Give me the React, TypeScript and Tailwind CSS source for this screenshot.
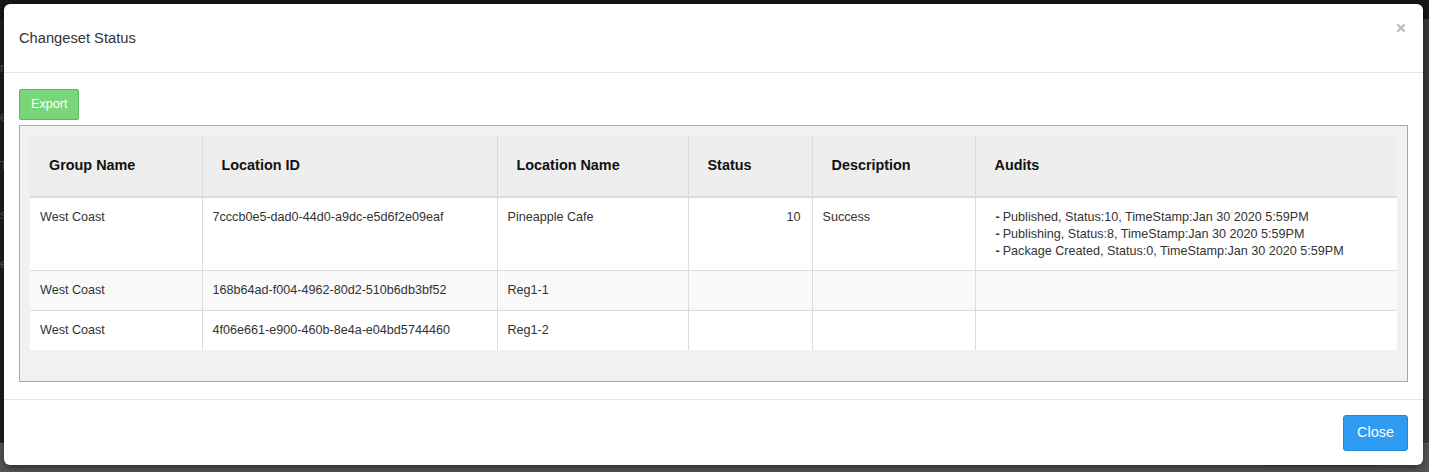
import { X } from "lucide-react";

type Row = {
  group: string;
  locationId: string;
  locationName: string;
  status?: number;
  description?: string;
  audits: string[];
};

const rows: Row[] = [
  {
    group: "West Coast",
    locationId: "7cccb0e5-dad0-44d0-a9dc-e5d6f2e09eaf",
    locationName: "Pineapple Cafe",
    status: 10,
    description: "Success",
    audits: [
      "Published, Status:10, TimeStamp:Jan 30 2020 5:59PM",
      "Publishing, Status:8, TimeStamp:Jan 30 2020 5:59PM",
      "Package Created, Status:0, TimeStamp:Jan 30 2020 5:59PM",
    ],
  },
  {
    group: "West Coast",
    locationId: "168b64ad-f004-4962-80d2-510b6db3bf52",
    locationName: "Reg1-1",
    audits: [],
  },
  {
    group: "West Coast",
    locationId: "4f06e661-e900-460b-8e4a-e04bd5744460",
    locationName: "Reg1-2",
    audits: [],
  },
];

const headers = ["Group Name", "Location ID", "Location Name", "Status", "Description", "Audits"];

// page behind the dialog, dimmed by the backdrop
function BackgroundPage() {
  return (
    <div className="flex h-full flex-col">
      <div className="h-[20px] bg-[#161616]" />
      <div className="flex h-[446px]">
        <div className="flex w-[60px] flex-col gap-[30px] bg-[#1f1f1f] pt-[40px] text-[12.6px] text-[#5a5a5a]">
          <span>r</span>
          <span>e</span>
          <span>T</span>
          <span>s</span>
          <span>e</span>
        </div>
        <div className="flex-1 bg-[#3b3b3b]" />
      </div>
      <div className="flex h-[30px] items-start border-t border-[#6a6a6a] bg-[#575757] pt-[2px] text-[12.6px] text-[#151515]">
        <div className="w-[244px]" />
        <div className="w-[17px] border-l border-[#4a4a4a]" />
        <div className="flex w-[58px] justify-center border-l border-[#4a4a4a]">
          <span className="mt-[1px] h-[14px] w-[14px] border border-[#333] bg-[#606060]" />
        </div>
        <div className="w-[212px] border-l border-[#4a4a4a] pl-[10px]">
          Changeset 20200130-1 <span className="text-[#20446b]">(1)</span>
        </div>
        <div className="w-[186px] border-l border-[#4a4a4a] pl-[10px]">1/30/2020 8:43:24 AM</div>
        <div className="w-[151px] border-l border-[#4a4a4a] pl-[10px]">Melissa Cruz</div>
        <div className="w-[107px] border-l border-[#4a4a4a]" />
        <div className="w-[276px] border-l border-[#4a4a4a] pl-[10px]">Pineapple Cafe</div>
        <div className="border-l border-[#4a4a4a] pl-[12px]">
          <div className="h-[20px] w-[113px] bg-[#2c4a2c]" />
        </div>
      </div>
    </div>
  );
}

export default function App() {
  return (
    <div className="relative h-[472px] w-[1429px] overflow-hidden bg-[#3b3b3b] font-['Liberation_Sans',Arial,sans-serif]">
      <BackgroundPage />

      <div className="absolute left-[4px] top-[4px] flex w-[1419px] flex-col rounded-[6px] bg-white shadow-[0_3px_9px_rgba(0,0,0,0.5)]">
        <div className="flex h-[69px] items-center justify-between border-b border-[#e5e5e5] px-[15px]">
          <h4 className="text-[14.7px] text-[#333]">Changeset Status</h4>
          <button className="mr-[1px] -mt-[21px] text-[#bdbdbd]">
            <X className="h-[12px] w-[12px]" strokeWidth={4.5} />
          </button>
        </div>

        <div className="px-[15px] pb-[17px] pt-[16px]">
          <button className="h-[31px] rounded-[2px] border border-[#5cb85c] bg-[#79d579] px-[11px] text-[12.6px] text-white">
            Export
          </button>

          <div className="mt-[5px] border border-[#a8a8a8] bg-[#f1f1f1] px-[10px] pb-[31px] pt-[10px]">
            <table className="w-full table-fixed border-collapse">
              <colgroup>
                <col className="w-[172px]" />
                <col className="w-[295px]" />
                <col className="w-[191px]" />
                <col className="w-[124px]" />
                <col className="w-[163px]" />
                <col />
              </colgroup>
              <thead>
                <tr className="bg-[#eeeeee]">
                  {headers.map((h) => (
                    <th
                      key={h}
                      className="h-[61px] border-b-2 border-l border-[#dcdcdc] px-[19px] text-left align-middle text-[14.4px] font-bold text-[#111] first:border-l-0"
                    >
                      {h}
                    </th>
                  ))}
                </tr>
              </thead>
              <tbody>
                {rows.map((row, i) => (
                  <tr key={row.locationId} className={i % 2 === 1 ? "bg-[#f9f9f9]" : "bg-white"}>
                    <td className="border-t border-[#dcdcdc] px-[10px] py-[11px] align-top text-[12.6px] leading-[16.8px] text-[#333]">
                      {row.group}
                    </td>
                    <td className="border-l border-t border-[#dcdcdc] px-[10px] py-[11px] align-top text-[12.6px] leading-[16.8px] text-[#333]">
                      {row.locationId}
                    </td>
                    <td className="border-l border-t border-[#dcdcdc] px-[10px] py-[11px] align-top text-[12.6px] leading-[16.8px] text-[#333]">
                      {row.locationName}
                    </td>
                    <td className="border-l border-t border-[#dcdcdc] px-[11px] py-[11px] text-right align-top text-[12.6px] leading-[16.8px] text-[#333]">
                      {row.status ?? ""}
                    </td>
                    <td className="border-l border-t border-[#dcdcdc] px-[10px] py-[11px] align-top text-[12.6px] leading-[16.8px] text-[#333]">
                      {row.description ?? ""}
                    </td>
                    <td className="border-l border-t border-[#dcdcdc] py-[11px] pl-[20px] pr-[10px] align-top text-[12.6px] leading-[16.8px] text-[#333]">
                      {row.audits.length === 0 && "\u00a0"}
                      {row.audits.map((a) => (
                        <div key={a}>
                          <b>-</b>
                          <span className="ml-[3px]">{a}</span>
                        </div>
                      ))}
                    </td>
                  </tr>
                ))}
              </tbody>
            </table>
          </div>
        </div>

        <div className="flex justify-end border-t border-[#e5e5e5] px-[15px] pb-[14px] pt-[15px]">
          <button className="h-[36px] w-[65px] rounded-[3px] border border-[#1f86d6] bg-[#2f9cf3] text-[14.4px] text-white">
            Close
          </button>
        </div>
      </div>
    </div>
  );
}
